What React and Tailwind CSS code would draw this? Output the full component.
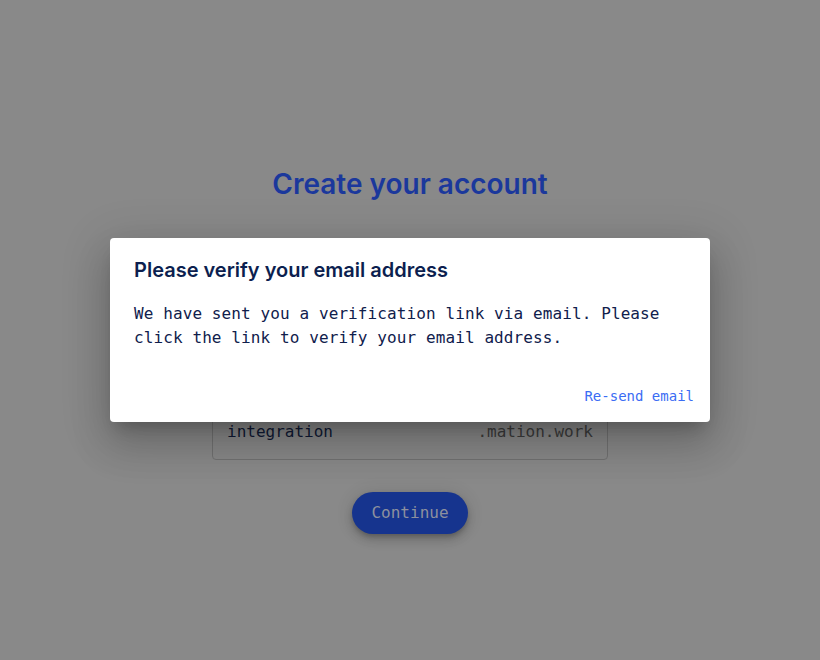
import { useState } from 'react'

export default function App() {
  const [open] = useState(true)
  const [subdomain, setSubdomain] = useState('integration')

  return (
    <div className="relative h-[660px] w-full overflow-hidden bg-[#898989]">
      {/* Page behind the dialog */}
      <div className="flex flex-col items-center pt-[164px]">
        <h1 className="font-['Inter',sans-serif] text-[28px] leading-[40px] font-semibold text-[#1b389c]">
          Create your account
        </h1>

        <div className="mt-[200px] flex h-[56px] w-[396px] items-center rounded border border-[#727272] px-[14px] font-['DejaVu_Sans_Mono',monospace] text-[16px]">
          <input
            value={subdomain}
            onChange={(e) => setSubdomain(e.target.value)}
            className="min-w-0 flex-1 bg-transparent text-[#101a35] outline-none"
          />
          <span className="text-[#3c3c3c]">.mation.work</span>
        </div>

        <button className="mt-[32px] h-[42px] w-[116px] rounded-full bg-[#16348e] font-['DejaVu_Sans_Mono',monospace] text-[16px] font-medium text-[#8d909e] shadow-[0_3px_5px_-1px_rgba(0,0,0,0.2),0_6px_10px_0_rgba(0,0,0,0.14),0_1px_18px_0_rgba(0,0,0,0.12)]">
          Continue
        </button>
      </div>

      {/* Verify email dialog */}
      {open && (
        <div className="absolute inset-0 flex items-center justify-center">
          <div className="w-[600px] rounded bg-white shadow-[0_11px_15px_-7px_rgba(0,0,0,0.2),0_24px_38px_3px_rgba(0,0,0,0.14),0_9px_46px_8px_rgba(0,0,0,0.12)]">
            <h2 className="px-6 py-4 font-['Inter',sans-serif] text-[20px] leading-[32px] font-semibold text-[#0c1f4f]">
              Please verify your email address
            </h2>
            <div className="px-6 pb-5">
              <p className="font-['DejaVu_Sans_Mono',monospace] text-[16px] leading-[24px] tracking-[0.1px] text-[#10204c]">
                We have sent you a verification link via email. Please click the link to verify your email address.
              </p>
            </div>
            <div className="flex justify-end p-2">
              <button className="h-[36px] rounded px-2 font-['DejaVu_Sans_Mono',monospace] text-[14px] text-[#3a6cf4]">
                Re-send email
              </button>
            </div>
          </div>
        </div>
      )}
    </div>
  )
}
